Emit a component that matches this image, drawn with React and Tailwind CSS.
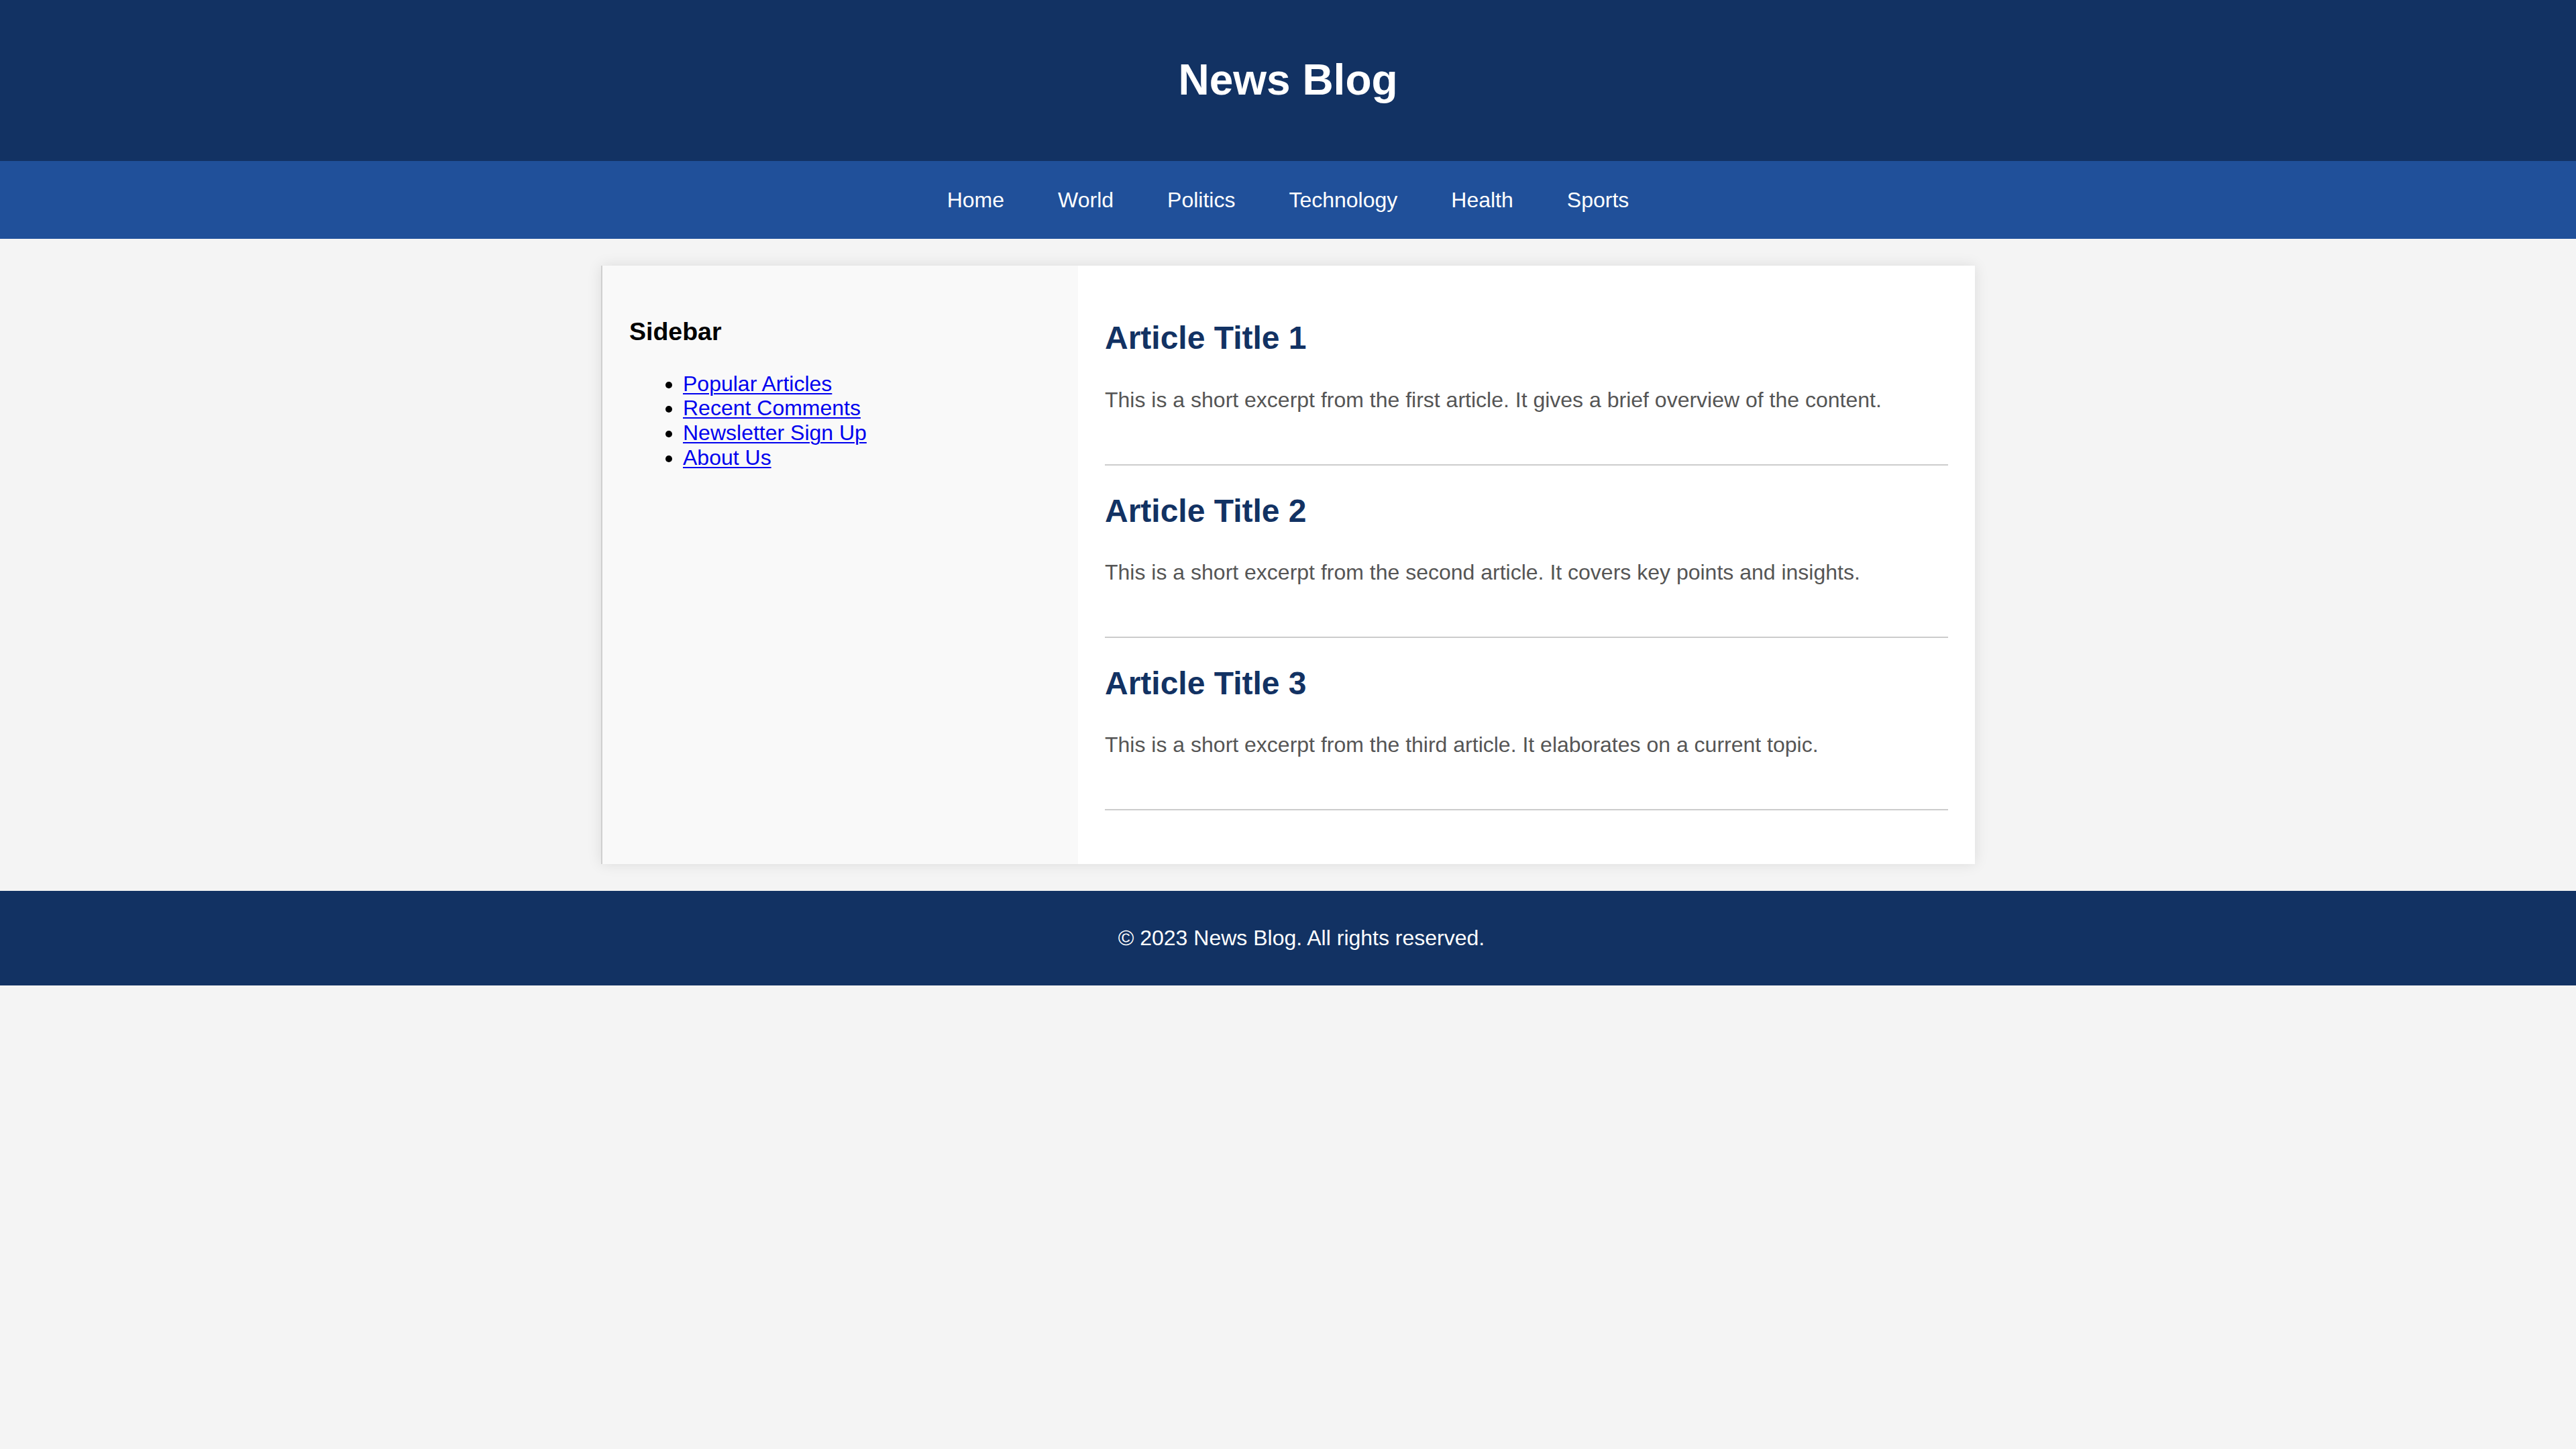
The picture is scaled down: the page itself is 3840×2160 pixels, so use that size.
const navItems = ["Home", "World", "Politics", "Technology", "Health", "Sports"];

const sidebarLinks = ["Popular Articles", "Recent Comments", "Newsletter Sign Up", "About Us"];

const articles = [
  {
    title: "Article Title 1",
    excerpt: "This is a short excerpt from the first article. It gives a brief overview of the content.",
  },
  {
    title: "Article Title 2",
    excerpt: "This is a short excerpt from the second article. It covers key points and insights.",
  },
  {
    title: "Article Title 3",
    excerpt: "This is a short excerpt from the third article. It elaborates on a current topic.",
  },
];

export default function App() {
  return (
    <div className="min-h-screen bg-[#f4f4f4] font-['Liberation_Sans',Arial,sans-serif] text-black">
      {/* Header */}
      <header className="bg-[#123263] py-[40px] text-center">
        <h1 className="my-[43px] text-[64px] font-bold leading-[1.15] text-white">News Blog</h1>
      </header>

      {/* Nav */}
      <nav className="bg-[#20509a] py-[40px]">
        <ul className="flex justify-center gap-[80px]">
          {navItems.map((item) => (
            <li key={item}>
              <a href="#" className="text-[32px] leading-[1.15] text-white no-underline">
                {item}
              </a>
            </li>
          ))}
        </ul>
      </nav>

      {/* Content */}
      <div className="mx-auto mt-[40px] flex w-[2048px] bg-white shadow-[0_0_20px_rgba(0,0,0,0.1)]">
        <aside className="w-[711px] shrink-0 border-l-2 border-[#cfcfcf] bg-[#f9f9f9] p-[40px]">
          <h3 className="my-[37px] text-[37.5px] font-bold leading-[1.15]">Sidebar</h3>
          <ul className="list-disc pl-[80px] text-[32px] leading-[1.15]">
            {sidebarLinks.map((link) => (
              <li key={link}>
                <a href="#" className="text-[#0000ee] underline decoration-2 underline-offset-[3px]">
                  {link}
                </a>
              </li>
            ))}
          </ul>
        </aside>

        <main className="flex-1 p-[40px]">
          {articles.map((a) => (
            <article key={a.title} className="mb-[40px] border-b-2 border-[#cccccc] pb-[40px]">
              <h2 className="mt-[40px] mb-[40px] text-[48px] font-bold leading-[1.15] text-[#123263]">
                {a.title}
              </h2>
              <p className="my-[32px] text-[32px] leading-[1.5] text-[#555555]">{a.excerpt}</p>
            </article>
          ))}
        </main>
      </div>

      {/* Footer */}
      <footer className="mt-[40px] bg-[#123263] py-[20px] pl-[40px] text-center text-white">
        <p className="my-[32px] text-[32px] leading-[1.15]">© 2023 News Blog. All rights reserved.</p>
      </footer>
    </div>
  );
}
